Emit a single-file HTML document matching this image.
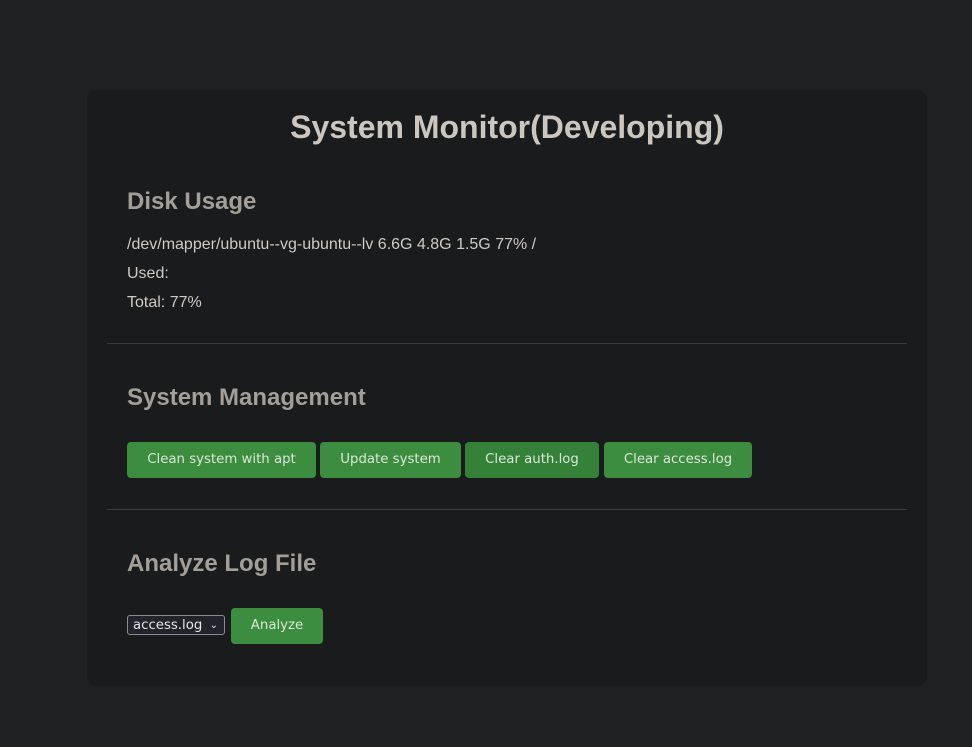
<!DOCTYPE html>
<html><head><meta charset="utf-8"><style>
html,body{margin:0;padding:0;background:#1f2122;width:972px;height:747px;overflow:hidden;font-family:"Liberation Sans",Arial,sans-serif;}
.card{position:absolute;left:87px;top:90px;width:840px;height:596px;background:#1a1b1d;border-radius:10px;}
.a{position:absolute;white-space:nowrap;}
h1{position:absolute;margin:0;left:0;width:840px;text-align:center;top:19px;font-size:32px;font-weight:bold;color:#cbc6c0;}
.h2{font-size:24px;font-weight:bold;color:#a39e98;}
.t{font-size:16px;color:#cfcac4;}
.hr{position:absolute;left:20px;width:800px;height:1px;background:#3a3c3e;}
.btn{position:absolute;top:352px;height:36px;background:#3d8d41;border-radius:4px;color:#d8e8d6;font-family:"DejaVu Sans",sans-serif;font-size:13.3px;line-height:36px;text-align:center;}
</style></head><body>
<div class="card">
<h1>System Monitor(Developing)</h1>
<div class="a h2" style="left:40px;top:98px">Disk Usage</div>
<div class="a t" style="left:40px;top:146px">/dev/mapper/ubuntu--vg-ubuntu--lv 6.6G 4.8G 1.5G 77% /</div>
<div class="a t" style="left:40px;top:175px">Used:</div>
<div class="a t" style="left:40px;top:204px">Total: 77%</div>
<div class="hr" style="top:253px"></div>
<div class="a h2" style="left:40px;top:294px">System Management</div>
<div class="btn" style="left:40px;width:189px">Clean system with apt</div>
<div class="btn" style="left:233px;width:141px">Update system</div>
<div class="btn" style="left:378px;width:134px;background:#36813a">Clear auth.log</div>
<div class="btn" style="left:517px;width:148px">Clear access.log</div>
<div class="hr" style="top:419px"></div>
<div class="a h2" style="left:40px;top:460px">Analyze Log File</div>
<div class="a" style="left:40px;top:525px;width:98px;height:20px;border:1px solid #8a8c90;border-radius:3px;background:#23232b;color:#e6e6e6;font-family:'DejaVu Sans',sans-serif;font-size:13.3px;line-height:20px;box-sizing:border-box;padding-left:5px">access.log<span style="position:absolute;right:6px;top:0;font-size:10px">&#8964;</span></div>
<div class="btn" style="top:518px;left:144px;width:92px">Analyze</div>
</div>
</body></html>
